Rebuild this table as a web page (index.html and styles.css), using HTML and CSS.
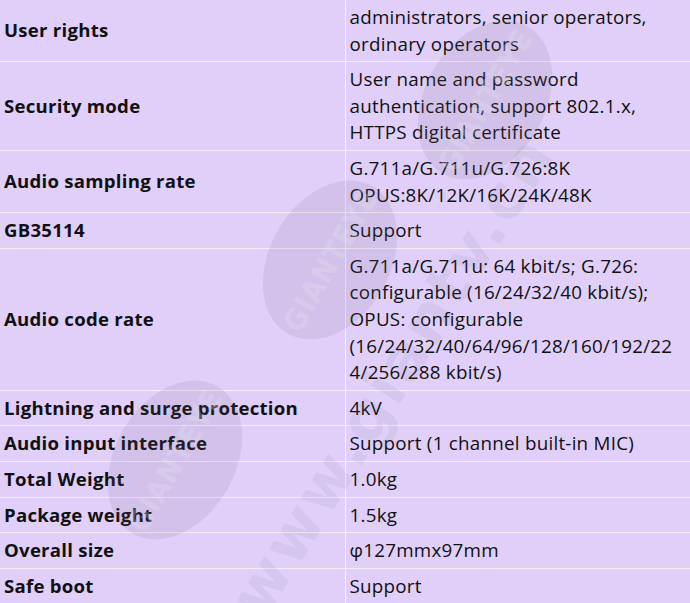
FILE: index.html
```html
<!DOCTYPE html>
<html>
<head>
<meta charset="utf-8">
<link rel="stylesheet" href="styles.css">
</head>
<body>
<div class="wrap">
<table class="spec">
<colgroup><col class="c1"><col class="c2"></colgroup>
<tr><th>User rights</th><td>administrators, senior operators, ordinary operators</td></tr>
<tr><th>Security mode</th><td>User name and password authentication, support 802.1.x, HTTPS digital certificate</td></tr>
<tr><th>Audio sampling rate</th><td>G.711a/G.711u/G.726:8K<br>OPUS:8K/12K/16K/24K/48K</td></tr>
<tr><th>GB35114</th><td>Support</td></tr>
<tr><th>Audio code rate</th><td>G.711a/G.711u: 64 kbit/s; G.726: configurable (16/24/32/40 kbit/s);<br>OPUS: configurable<br>(16/24/32/40/64/96/128/160/192/22<br>4/256/288 kbit/s)</td></tr>
<tr><th>Lightning and surge protection</th><td>4kV</td></tr>
<tr><th>Audio input interface</th><td>Support (1 channel built-in MIC)</td></tr>
<tr><th>Total Weight</th><td>1.0kg</td></tr>
<tr><th>Package weight</th><td>1.5kg</td></tr>
<tr><th>Overall size</th><td>φ127mmx97mm</td></tr>
<tr><th>Safe boot</th><td>Support</td></tr>
</table>
<div class="wm wm-e1"><span>GIANTEYE</span></div>
<div class="wm wm-e2"><span>GIANTEYE</span></div>
<div class="wm wm-e3"><span>GIANTEYE</span></div>
<div class="wm-url">www.giantv.cn</div>
</div>
</body>
</html>
```
FILE: styles.css
```css
html, body { margin: 0; padding: 0; background: #dfcff9; }
body { font-family: "Open Sans", "Noto Sans", sans-serif; color: #111; overflow: hidden; }
.wrap { position: relative; width: 690px; height: 603px; overflow: hidden; background: #dfcff9; }
.spec { border-collapse: collapse; width: 690px; table-layout: fixed; }
.c1 { width: 345px; }
.spec th, .spec td {
  border: 1px solid #f4effc;
  padding: 4px 4px 4px 4px;
  font-size: 18.8px;
  line-height: 26.6px;
  vertical-align: middle;
  text-align: left;
}
.spec tr:first-child th, .spec tr:first-child td { border-top: none; }
.spec th { font-weight: 700; border-left: none; font-size: 18.6px; letter-spacing: 0.25px; }
.spec td { font-weight: 400; border-right: none; letter-spacing: 0.25px; }
.wm { position: absolute; border-radius: 50%; background: rgba(120, 110, 130, 0.13); display: flex; align-items: center; justify-content: center; }
.wm span { font-family: "DejaVu Sans Condensed", "Liberation Sans Narrow", sans-serif; font-weight: 700; font-size: 30px; color: rgba(230, 225, 240, 0.3); letter-spacing: 1px; }
.wm-e1 { left: 245px; top: 200px; width: 170px; height: 120px; transform: rotate(-60deg); }
.wm-e2 { left: 400px; top: 40px; width: 170px; height: 120px; transform: rotate(-60deg); }
.wm-e3 { left: 90px; top: 400px; width: 170px; height: 120px; transform: rotate(-60deg); }
.wm-url { position: absolute; left: 215px; top: 590px; font-family: "DejaVu Sans", sans-serif; font-weight: 700; font-size: 62px; color: rgba(120, 110, 130, 0.09); transform: rotate(-58deg); transform-origin: left top; white-space: nowrap; letter-spacing: 3px; }
```
